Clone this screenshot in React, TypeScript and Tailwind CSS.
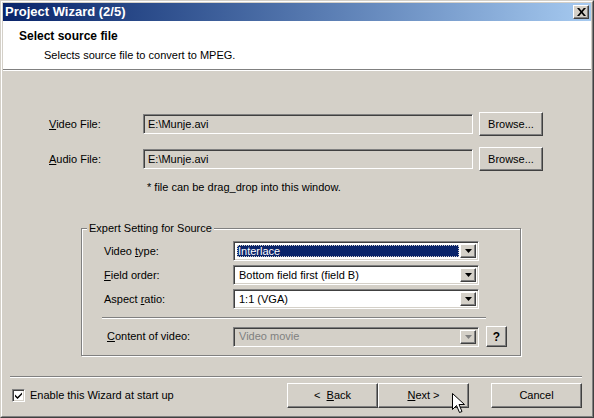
import React from 'react';

const raised =
  'border border-t-white border-l-white border-r-[#404040] border-b-[#404040] shadow-[inset_-1px_-1px_0_#808080] bg-[#d4d0c8]';
const sunken =
  'border border-t-[#808080] border-l-[#808080] border-r-white border-b-white shadow-[inset_1px_1px_0_#404040,inset_-1px_-1px_0_#d4d0c8]';

const Arrow: React.FC<{ disabled?: boolean }> = ({ disabled }) => (
  <svg width="7" height="4" viewBox="0 0 7 4">
    <polygon points="0,0 7,0 3.5,4" fill={disabled ? '#808080' : '#000'} />
  </svg>
);

const Combo: React.FC<{ value: string; selected?: boolean; disabled?: boolean }> = ({ value, selected, disabled }) => (
  <div className={`w-[246px] h-[20px] flex items-stretch p-[2px] ${sunken} ${disabled ? 'bg-[#d4d0c8]' : 'bg-white'}`}>
    <div className="flex-1 flex items-center p-[1px]">
      {selected ? (
        <div className="w-full h-full flex items-center bg-[#0a246a] text-white px-[1px] outline-1 outline-dotted outline-[#d4d0c8] -outline-offset-1">
          {value}
        </div>
      ) : (
        <span className={`px-[2px] ${disabled ? 'text-[#808080]' : 'text-black'}`}>{value}</span>
      )}
    </div>
    <div className={`w-[16px] flex items-center justify-center ${raised}`}>
      <Arrow disabled={disabled} />
    </div>
  </div>
);

const Btn: React.FC<{ className?: string; children: React.ReactNode }> = ({ className = '', children }) => (
  <button className={`flex items-center justify-center text-black ${raised} ${className}`}>{children}</button>
);

const FileRow: React.FC<{ label: React.ReactNode; value: string; className?: string }> = ({ label, value, className = '' }) => (
  <div className={`flex items-center ${className}`}>
    <div className="w-[94px]">{label}</div>
    <div className={`w-[330px] h-[20px] flex items-center px-[4px] bg-[#d4d0c8] ${sunken}`}>{value}</div>
    <Btn className="ml-[6px] w-[64px] h-[24px]">Browse...</Btn>
  </div>
);

const SettingRow: React.FC<{ label: React.ReactNode; children: React.ReactNode }> = ({ label, children }) => (
  <div className="flex items-center">
    <div className="w-[129px]">{label}</div>
    {children}
  </div>
);

export default function App() {
  return (
    <div className="relative w-[594px] h-[418px] font-['Liberation_Sans',Arial,sans-serif] text-[11px] text-black select-none">
      <div className="w-full h-full border border-t-[#d4d0c8] border-l-[#d4d0c8] border-r-[#404040] border-b-[#404040]">
        <div className="w-full h-full border border-t-white border-l-white border-r-[#808080] border-b-[#808080] p-[1px] bg-[#d4d0c8] flex flex-col">
          {/* title bar */}
          <div className="h-[18px] flex items-center bg-gradient-to-r from-[#0a246a] to-[#a6caf0]">
            <span className="ml-[2px] text-white font-bold text-[13px]">Project Wizard (2/5)</span>
            <div className={`ml-auto mr-[2px] w-[16px] h-[14px] flex items-center justify-center ${raised}`}>
              <svg width="9" height="8" viewBox="0 0 9 8">
                <path d="M0 0h2.2l2.3 2.8L6.8 0H9L5.6 4 9 8H6.8L4.5 5.2 2.2 8H0l3.4-4z" fill="#000" />
              </svg>
            </div>
          </div>

          {/* header */}
          <div className="h-[48px] bg-white flex flex-col">
            <div className="pl-[16px] pt-[8px] font-bold text-[12px] leading-[14px]">Select source file</div>
            <div className="pl-[41px] mt-[6px] leading-[13px]">Selects source file to convert to MPEG.</div>
          </div>
          <div className="h-px bg-[#808080]" />
          <div className="h-px bg-white" />

          {/* body */}
          <div className="flex-1 flex flex-col">
            <div className="pl-[46px] mt-[41px]">
              <FileRow label={<><span className="underline">V</span>ideo File:</>} value="E:\Munje.avi" />
              <FileRow className="mt-[11px]" label={<><span className="underline">A</span>udio File:</>} value="E:\Munje.avi" />
              <div className="pl-[98px] mt-[10px] leading-[12px]">* file can be drag_drop into this window.</div>
            </div>

            <div className="relative ml-[78px] mt-[35px] w-[440px] h-[128px] border border-[#808080] shadow-[1px_1px_0_#fff,inset_1px_1px_0_#fff]">
              <span className="absolute -top-[7px] left-[5px] px-[2px] bg-[#d4d0c8] leading-[12px]">Expert Setting for Source</span>
              <div className="pl-[22px] pt-[12px] flex flex-col">
                <div className="flex flex-col gap-[4px]">
                  <SettingRow label={<>Video <span className="underline">t</span>ype:</>}>
                    <Combo value="Interlace" selected />
                  </SettingRow>
                  <SettingRow label={<><span className="underline">F</span>ield order:</>}>
                    <Combo value="Bottom field first (field B)" />
                  </SettingRow>
                  <SettingRow label={<>Aspect <span className="underline">r</span>atio:</>}>
                    <Combo value="1:1 (VGA)" />
                  </SettingRow>
                </div>
                <div className="-ml-[2px] mt-[8px] w-[384px] h-px bg-[#808080]" />
                <div className="-ml-[2px] w-[384px] h-px bg-white" />
                <div className="mt-[7px] flex items-center">
                  <div className="w-[129px] pl-[3px]">
                    <span className="underline">C</span>ontent of video:
                  </div>
                  <Combo value="Video movie" disabled />
                  <Btn className="ml-[7px] w-[21px] h-[21px] font-bold text-[12px]">?</Btn>
                </div>
              </div>
            </div>

            {/* footer */}
            <div className="mt-auto">
              <div className="ml-[7px] w-[572px] h-px bg-[#808080]" />
              <div className="ml-[7px] w-[572px] h-px bg-white" />
              <div className="mt-[5px] mb-[7px] flex items-center">
                <div className={`ml-[9px] w-[13px] h-[13px] bg-white flex items-center justify-center ${sunken}`}>
                  <svg width="7" height="7" viewBox="0 0 7 7">
                    <path d="M0 2.5l2.5 2.5L7 0.5v2L2.5 7 0 4.5z" fill="#000" />
                  </svg>
                </div>
                <span className="ml-[5px]">Enable this Wizard at start up</span>
                <Btn className="ml-auto w-[91px] h-[25px]">
                  &lt;&nbsp;&nbsp;<span className="underline">B</span>ack
                </Btn>
                <Btn className="w-[91px] h-[25px]">
                  <span className="underline">N</span>ext &gt;
                </Btn>
                <Btn className="ml-[22px] mr-[9px] w-[91px] h-[25px]">Cancel</Btn>
              </div>
            </div>
          </div>
        </div>
      </div>

      {/* mouse cursor */}
      <svg className="absolute left-[452px] top-[393px]" width="13" height="21" viewBox="0 0 13 21">
        <path d="M0.5 0.5v16l4-4 3 7 2.5-1-3-7h5.5z" fill="#fff" stroke="#000" strokeWidth="1" />
      </svg>
    </div>
  );
}
